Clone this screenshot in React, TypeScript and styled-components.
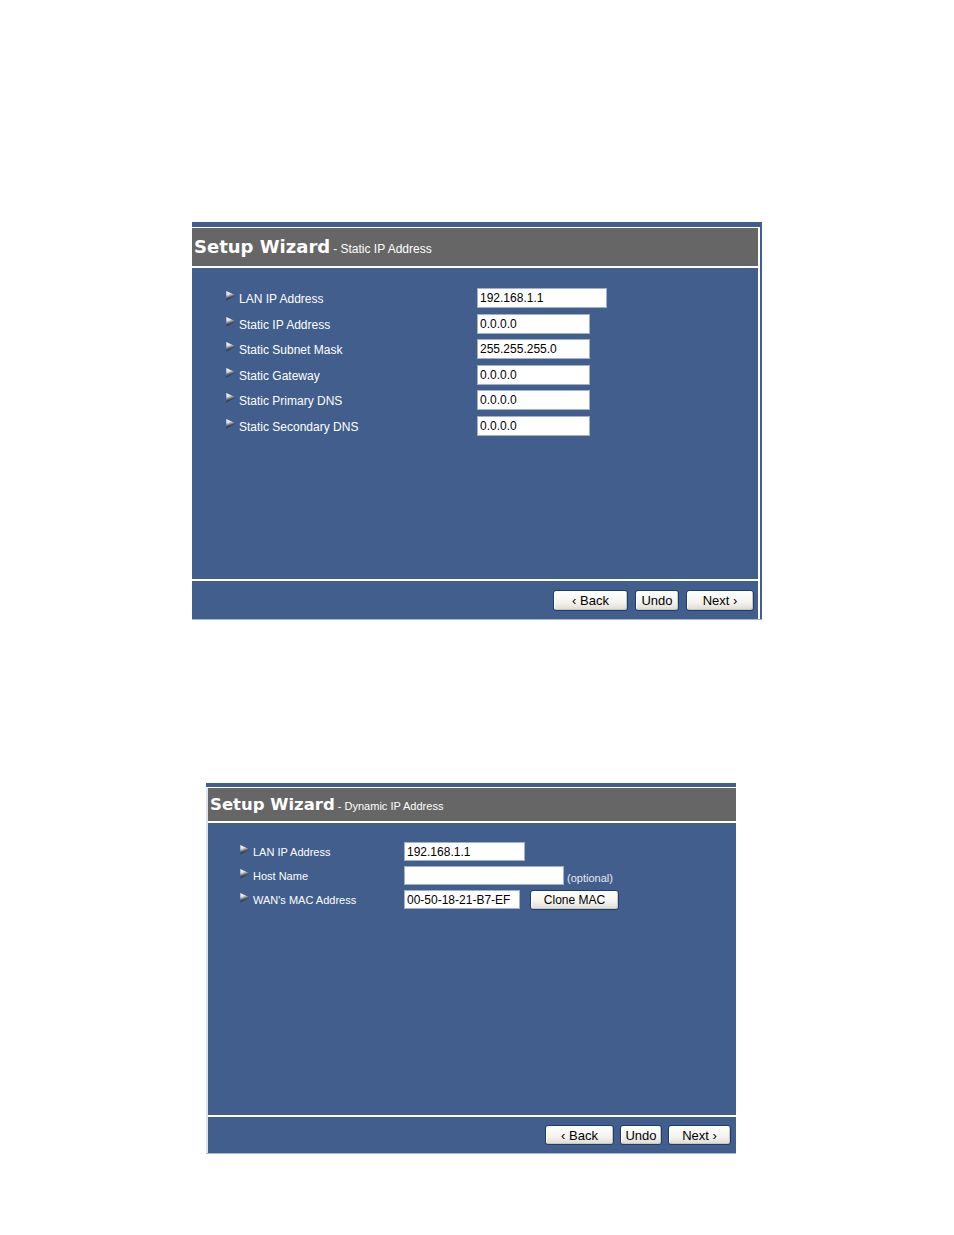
import React from "react";
import styled, { createGlobalStyle } from "styled-components";

const GlobalStyle = createGlobalStyle`
  html, body {
    margin: 0;
    padding: 0;
    background: #ffffff;
  }
  body {
    font-family: "Liberation Sans", Arial, sans-serif;
  }
`;

interface FieldRow {
  label: string;
  value: string;
  width: number;
  note?: string;
  action?: string;
}

interface WizardProps {
  subtitle: string;
  rows: FieldRow[];
  left: number;
  width: number;
  strip: number;
  side: "left" | "right";
  headerHeight: number;
  bodyHeight: number;
  footerHeight: number;
  titleSize: number;
  subSize: number;
  labelSize: number;
  labelCol: number;
  padLeft: number;
  padTop: number;
  rowGap: number;
  inputHeight: number;
  buttonHeight: number;
  buttonTop: number;
  buttonRight: number;
  buttonGap: number;
  buttons: { text: string; width: number }[];
}

const staticRows: FieldRow[] = [
  { label: "LAN IP Address", value: "192.168.1.1", width: 130 },
  { label: "Static IP Address", value: "0.0.0.0", width: 113 },
  { label: "Static Subnet Mask", value: "255.255.255.0", width: 113 },
  { label: "Static Gateway", value: "0.0.0.0", width: 113 },
  { label: "Static Primary DNS", value: "0.0.0.0", width: 113 },
  { label: "Static Secondary DNS", value: "0.0.0.0", width: 113 },
];

const dynamicRows: FieldRow[] = [
  { label: "LAN IP Address", value: "192.168.1.1", width: 121 },
  { label: "Host Name", value: "", width: 160, note: "(optional)" },
  {
    label: "WAN's MAC Address",
    value: "00-50-18-21-B7-EF",
    width: 116,
    action: "Clone MAC",
  },
];

function Bullet() {
  return (
    <BulletIcon width="10" height="10" viewBox="0 0 10 10">
      <defs>
        <linearGradient id="bulletShade" x1="0" y1="0" x2="0.35" y2="1">
          <stop offset="0" stopColor="#ffffff" />
          <stop offset="0.4" stopColor="#dcdee4" />
          <stop offset="0.7" stopColor="#4e5360" />
          <stop offset="1" stopColor="#141826" />
        </linearGradient>
      </defs>
      <polygon points="0.3,0 9.9,4.6 0.3,9.4" fill="url(#bulletShade)" />
    </BulletIcon>
  );
}

function Wizard(p: WizardProps) {
  return (
    <Frame $width={p.width} $left={p.left} $strip={p.strip} $side={p.side}>
      <Inner $side={p.side}>
        <Header $height={p.headerHeight}>
          <Title $size={p.titleSize}>Setup Wizard</Title>
          <Subtitle $size={p.subSize}>- {p.subtitle}</Subtitle>
        </Header>
        <Body $height={p.bodyHeight}>
          <Fields
            $labelCol={p.labelCol}
            $padLeft={p.padLeft}
            $padTop={p.padTop}
            $gap={p.rowGap}
            $row={p.inputHeight}
          >
            {p.rows.map((row) => (
              <React.Fragment key={row.label}>
                <Label $size={p.labelSize}>
                  <Bullet />
                  {row.label}
                </Label>
                <Cell>
                  <TextBox
                    readOnly
                    value={row.value}
                    $width={row.width}
                    $height={p.inputHeight}
                  />
                  {row.note && <Note>{row.note}</Note>}
                  {row.action && (
                    <Button $width={89} $height={p.inputHeight + 1} $size={12}>
                      {row.action}
                    </Button>
                  )}
                </Cell>
              </React.Fragment>
            ))}
          </Fields>
        </Body>
        <Footer
          $height={p.footerHeight}
          $top={p.buttonTop}
          $right={p.buttonRight}
          $gap={p.buttonGap}
        >
          {p.buttons.map((b) => (
            <Button
              key={b.text}
              $width={b.width}
              $height={p.buttonHeight}
              $size={13}
            >
              {b.text}
            </Button>
          ))}
        </Footer>
      </Inner>
    </Frame>
  );
}

export default function App() {
  return (
    <>
      <GlobalStyle />
      <Page>
        <Wizard
          subtitle="Static IP Address"
          rows={staticRows}
          left={192}
          width={570}
          strip={5}
          side="right"
          headerHeight={38}
          bodyHeight={311}
          footerHeight={38}
          titleSize={18}
          subSize={12}
          labelSize={12}
          labelCol={251}
          padLeft={34}
          padTop={20}
          rowGap={5.6}
          inputHeight={20}
          buttonHeight={21}
          buttonTop={9}
          buttonRight={4}
          buttonGap={7}
          buttons={[
            { text: "‹ Back", width: 75 },
            { text: "Undo", width: 44 },
            { text: "Next ›", width: 68 },
          ]}
        />
        <Wizard
          subtitle="Dynamic IP Address"
          rows={dynamicRows}
          left={206}
          width={530}
          strip={4}
          side="left"
          headerHeight={33}
          bodyHeight={292}
          footerHeight={36}
          titleSize={16.5}
          subSize={11}
          labelSize={11}
          labelCol={164}
          padLeft={32}
          padTop={19}
          rowGap={5}
          inputHeight={19}
          buttonHeight={20}
          buttonTop={8}
          buttonRight={5}
          buttonGap={6}
          buttons={[
            { text: "‹ Back", width: 69 },
            { text: "Undo", width: 42 },
            { text: "Next ›", width: 63 },
          ]}
        />
      </Page>
    </>
  );
}

const Page = styled.div`
  width: 954px;
  min-height: 1235px;
  padding-top: 222px;
  box-sizing: border-box;
  display: flex;
  flex-direction: column;
  gap: 163px;
`;

const Frame = styled.section<{
  $width: number;
  $left: number;
  $strip: number;
  $side: "left" | "right";
}>`
  width: ${(p) => p.$width}px;
  margin-left: ${(p) => p.$left}px;
  padding-top: ${(p) => p.$strip}px;
  padding-right: ${(p) => (p.$side === "right" ? 2 : 0)}px;
  background: #415e8c;
  box-sizing: border-box;
  border-bottom: 1px solid #a9b8cf;
`;

const Inner = styled.div<{ $side: "left" | "right" }>`
  border-top: 1px solid #ffffff;
  ${(p) =>
    p.$side === "right"
      ? "border-right: 2px solid #ffffff;"
      : "border-left: 2px solid #dfe4ec;"}
`;

const Header = styled.header<{ $height: number }>`
  height: ${(p) => p.$height}px;
  background: #666666;
  border-bottom: 2px solid #ffffff;
  display: flex;
  align-items: baseline;
  padding: 0 0 0 2px;
  box-sizing: content-box;
  line-height: ${(p) => p.$height}px;
`;

const Title = styled.h1<{ $size: number }>`
  margin: 0;
  font-family: "DejaVu Sans", Verdana, sans-serif;
  font-weight: bold;
  font-size: ${(p) => p.$size}px;
  color: #ffffff;
`;

const Subtitle = styled.span<{ $size: number }>`
  margin-left: 3px;
  font-family: "Liberation Sans", Arial, sans-serif;
  font-size: ${(p) => p.$size}px;
  color: #ffffff;
`;

const Body = styled.div<{ $height: number }>`
  height: ${(p) => p.$height}px;
  border-bottom: 2px solid #ffffff;
`;

const Fields = styled.div<{
  $labelCol: number;
  $padLeft: number;
  $padTop: number;
  $gap: number;
  $row: number;
}>`
  display: grid;
  grid-template-columns: ${(p) => p.$labelCol}px auto;
  grid-auto-rows: ${(p) => p.$row}px;
  row-gap: ${(p) => p.$gap}px;
  padding: ${(p) => p.$padTop}px 0 0 ${(p) => p.$padLeft}px;
  align-items: center;
`;

const Label = styled.div<{ $size: number }>`
  display: flex;
  align-items: center;
  gap: 3px;
  padding-top: 2px;
  color: #ffffff;
  font-size: ${(p) => p.$size}px;
  line-height: 1;
`;

const BulletIcon = styled.svg`
  flex: none;
  margin-top: -6px;
`;

const Cell = styled.div`
  display: flex;
  align-items: center;
  gap: 10px;
  height: 100%;
`;

const TextBox = styled.input<{ $width: number; $height: number }>`
  width: ${(p) => p.$width}px;
  height: ${(p) => p.$height}px;
  box-sizing: border-box;
  margin: 0;
  padding: 0 2px;
  border: 1px solid #9fb1cc;
  background: #ffffff;
  font-family: "Liberation Sans", Arial, sans-serif;
  font-size: 12px;
  color: #000000;
  outline: none;
`;

const Note = styled.span`
  margin-left: -7px;
  margin-top: 5px;
  font-size: 11px;
  color: #e6e9ef;
`;

const Footer = styled.footer<{
  $height: number;
  $top: number;
  $right: number;
  $gap: number;
}>`
  height: ${(p) => p.$height}px;
  display: flex;
  justify-content: flex-end;
  align-items: flex-start;
  gap: ${(p) => p.$gap}px;
  padding: ${(p) => p.$top}px ${(p) => p.$right}px 0 0;
  box-sizing: border-box;
`;

const Button = styled.button<{ $width: number; $height: number; $size: number }>`
  flex: none;
  width: ${(p) => p.$width}px;
  height: ${(p) => p.$height}px;
  margin: 0;
  padding: 0;
  border: 1px solid #1c3d6e;
  border-radius: 3px;
  background: linear-gradient(#ffffff 0%, #f4f3ee 60%, #dcdad2 100%);
  box-shadow: inset -1px -1px 0 #c9c7bd, inset 1px 1px 0 #ffffff;
  font-family: "Liberation Sans", Arial, sans-serif;
  font-size: ${(p) => p.$size}px;
  color: #000000;
  line-height: 1;
`;
